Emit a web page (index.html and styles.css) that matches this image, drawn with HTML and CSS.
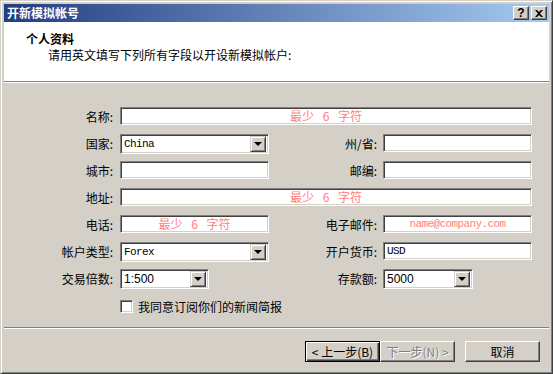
FILE: index.html
```html
<!DOCTYPE html>
<html lang="zh-CN">

<head>
    <meta charset="UTF-8">
    <title>开新模拟帐号</title>
    <link rel="stylesheet" href="styles.css">
</head>

<body>
    <div class="window">
        <div class="titlebar">
            <span class="title">开新模拟帐号</span>
            <div class="caption-btns">
                <span class="cap-btn help">?</span>
                <span class="cap-btn">
                    <svg width="8" height="7" viewBox="0 0 8 7">
                        <path d="M0 0h2l2 2 2-2h2L5 3.5 8 7H6L4 5 2 7H0l3-3.5z" fill="#000"/>
                    </svg>
                </span>
            </div>
        </div>

        <div class="header">
            <div class="header-title">个人资料</div>
            <div class="header-sub">请用英文填写下列所有字段以开设新模拟帐户:</div>
        </div>
        <div class="etched"></div>

        <div class="body">
            <div class="form">
                <div class="lbl">名称:</div>
                <div class="field wide hint">最少 6 字符</div>

                <div class="lbl">国家:</div>
                <div class="combo"><span class="value mono">China</span><span class="arrow"></span></div>
                <div class="lbl lbl-right">州/省:</div>
                <div class="field"></div>

                <div class="lbl">城市:</div>
                <div class="field"></div>
                <div class="lbl lbl-right">邮编:</div>
                <div class="field"></div>

                <div class="lbl">地址:</div>
                <div class="field wide hint">最少 6 字符</div>

                <div class="lbl">电话:</div>
                <div class="field hint">最少 6 字符</div>
                <div class="lbl lbl-right">电子邮件:</div>
                <div class="field hint mono">name@company.com</div>

                <div class="lbl">帐户类型:</div>
                <div class="combo"><span class="value mono">Forex</span><span class="arrow"></span></div>
                <div class="lbl lbl-right">开户货币:</div>
                <div class="field mono">USD</div>

                <div class="lbl">交易倍数:</div>
                <div class="cell"><div class="combo small"><span class="value">1:500</span><span class="arrow"></span></div></div>
                <div class="lbl lbl-right">存款额:</div>
                <div class="cell"><div class="combo small deposit"><span class="value">5000</span><span class="arrow"></span></div></div>

                <div class="check-row">
                    <span class="checkbox"></span>
                    <span>我同意订阅你们的新闻简报</span>
                </div>
            </div>
        </div>

        <div class="etched"></div>
        <div class="footer">
            <button class="btn default">&lt; 上一步(B)</button>
            <button class="btn disabled">下一步(N) &gt;</button>
            <button class="btn cancel">取消</button>
        </div>
    </div>
</body>

</html>
```

FILE: styles.css
```css
* {
    box-sizing: border-box;
}

body {
    margin: 0;
    font-family: "Noto Sans CJK SC", "Liberation Sans", sans-serif;
    font-size: 12px;
    color: #000;
    background: #d4d0c8;
}

.window {
    width: 553px;
    height: 374px;
    padding: 3px;
    background: #d4d0c8;
    border: 1px solid;
    border-color: #d4d0c8 #404040 #404040 #d4d0c8;
    box-shadow: inset 1px 1px #fff, inset -1px -1px #808080;
    display: flex;
    flex-direction: column;
}

.titlebar {
    height: 18px;
    display: flex;
    align-items: center;
    justify-content: space-between;
    padding: 0 2px 0 3px;
    background: linear-gradient(to right, #223e82, #a6caf0);
}

.title {
    color: #fff;
    font-weight: bold;
    line-height: 18px;
}

.caption-btns {
    display: flex;
    gap: 2px;
}

.cap-btn {
    width: 16px;
    height: 14px;
    display: flex;
    align-items: center;
    justify-content: center;
    background: #d4d0c8;
    border: 1px solid;
    border-color: #fff #404040 #404040 #fff;
    box-shadow: inset -1px -1px #808080;
    font-family: "Liberation Sans", sans-serif;
    font-weight: bold;
    font-size: 12px;
    line-height: 12px;
}

.header {
    height: 59px;
    background: #fff;
    padding: 9px 0 0 22px;
}

.header-title {
    font-weight: bold;
    line-height: 16px;
}

.header-sub {
    padding-left: 22px;
    line-height: 16px;
}

.etched {
    height: 2px;
    border-top: 1px solid #808080;
    border-bottom: 1px solid #fff;
}

.body {
    height: 244px;
    padding: 24px 0 0 36px;
}

.form {
    display: grid;
    grid-template-columns: 80px 149px 114px 149px;
    grid-auto-rows: 27px;
    align-items: start;
}

.lbl {
    height: 19px;
    line-height: 19px;
    text-align: right;
    padding-right: 7px;
    white-space: nowrap;
}

.lbl-right {
    padding-right: 6px;
}

.field {
    height: 18px;
    background: #fff;
    border: 1px solid;
    border-color: #808080 #fff #fff #808080;
    box-shadow: inset 1px 1px #404040, inset -1px -1px #d4d0c8;
    padding: 0 3px;
    line-height: 16px;
    white-space: nowrap;
    overflow: hidden;
}

.wide {
    grid-column: 2 / 5;
}

.hint {
    color: #ff8080;
    text-align: center;
    word-spacing: 6px;
}

.mono {
    font-family: "Liberation Mono", "Noto Sans CJK SC", monospace;
    font-size: 11px;
    letter-spacing: -0.6px;
    word-spacing: 0;
}

.combo {
    height: 20px;
    display: flex;
    align-items: center;
    background: #fff;
    border: 1px solid;
    border-color: #808080 #fff #fff #808080;
    box-shadow: inset 1px 1px #404040, inset -1px -1px #d4d0c8;
    padding: 2px;
}

.combo .value {
    flex: 1;
    padding-left: 1px;
    line-height: 16px;
}

.combo.small {
    width: 89px;
}

.combo.deposit {
    width: 90px;
}

.combo .value:not(.mono) {
    font-family: "Liberation Sans", sans-serif;
}

.arrow {
    width: 16px;
    height: 16px;
    background: #d4d0c8;
    border: 1px solid;
    border-color: #d4d0c8 #404040 #404040 #d4d0c8;
    box-shadow: inset 1px 1px #fff, inset -1px -1px #808080;
    position: relative;
}

.arrow::after {
    content: "";
    position: absolute;
    left: 3px;
    top: 5px;
    border-left: 4px solid transparent;
    border-right: 4px solid transparent;
    border-top: 4px solid #000;
}

.check-row {
    grid-column: 2 / 5;
    display: flex;
    align-items: center;
    gap: 5px;
    margin-top: 3px;
    line-height: 15px;
}

.checkbox {
    width: 13px;
    height: 13px;
    background: #fff;
    border: 1px solid;
    border-color: #808080 #fff #fff #808080;
    box-shadow: inset 1px 1px #404040, inset -1px -1px #d4d0c8;
}

.footer {
    flex: 1;
    display: flex;
    justify-content: flex-end;
    align-items: flex-start;
    padding: 12px 9px 0 0;
}

.btn {
    width: 75px;
    height: 21px;
    padding: 0;
    font-family: "Noto Sans CJK SC", "Liberation Sans", sans-serif;
    font-size: 12px;
    line-height: 17px;
    color: #000;
    background: #d4d0c8;
    border: 1px solid;
    border-color: #fff #404040 #404040 #fff;
    box-shadow: inset -1px -1px #808080;
}

.btn.default {
    border-color: #000;
    box-shadow: inset 1px 1px #fff, inset -1px -1px #404040, inset -2px -2px #808080;
}

.btn.disabled {
    color: #808080;
    text-shadow: 1px 1px #fff;
}

.btn.cancel {
    margin-left: 10px;
}
```
